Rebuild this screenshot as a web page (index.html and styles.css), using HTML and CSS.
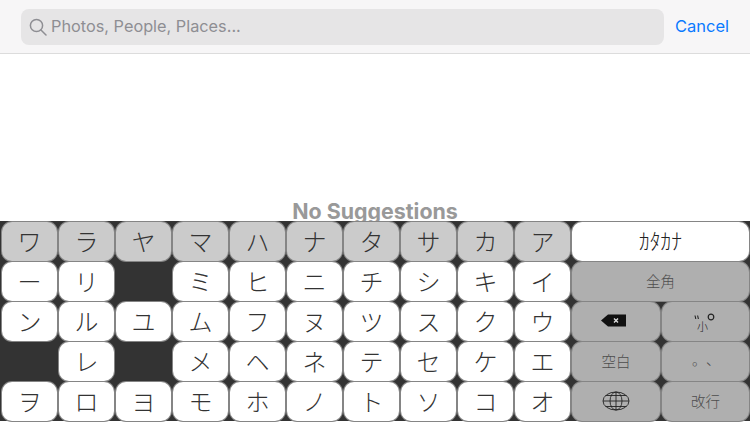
FILE: index.html
```html
<!DOCTYPE html>
<html lang="ja">
<head>
<meta charset="utf-8">
<title>Search</title>
<link rel="stylesheet" href="styles.css">
</head>
<body>
<div class="page">
  <header class="search-bar">
    <div class="field">
      <svg class="search-icon" width="18" height="18" viewBox="0 0 18 18" fill="none" stroke="#8e8e93" stroke-width="1.5" stroke-linecap="round"><circle cx="7.5" cy="7.500" r="6.100"/><path d="M12 12l5 5"/></svg>
      <span class="placeholder">Photos, People, Places...</span>
    </div>
    <span class="cancel">Cancel</span>
  </header>
  <main class="results"><p class="empty">No Suggestions</p></main>
  <section class="keyboard">
    <div class="key alt">ワ</div><div class="key alt">ラ</div><div class="key alt">ヤ</div><div class="key alt">マ</div><div class="key alt">ハ</div><div class="key alt">ナ</div><div class="key alt">タ</div><div class="key alt">サ</div><div class="key alt">カ</div><div class="key alt">ア</div><div class="key wide mode">ｶﾀｶﾅ</div>
    <div class="key">ー</div><div class="key">リ</div><div class="blank"></div><div class="key">ミ</div><div class="key">ヒ</div><div class="key">ニ</div><div class="key">チ</div><div class="key">シ</div><div class="key">キ</div><div class="key">イ</div><div class="key wide fn">全角</div>
    <div class="key">ン</div><div class="key">ル</div><div class="key">ユ</div><div class="key">ム</div><div class="key">フ</div><div class="key">ヌ</div><div class="key">ツ</div><div class="key">ス</div><div class="key">ク</div><div class="key">ウ</div>
    <div class="key fn"><svg class="backspace" width="25" height="13" viewBox="0 0 25 13"><path d="M0 6.500L7 .5h18v12H7z" fill="#111"/><path d="M13 4.500l4 4M17 4.500l-4 4" stroke="#ddd" stroke-width="1.400"/></svg></div>
    <div class="key fn small-key">
      <svg class="dakuten" width="5" height="5" viewBox="0 0 5 5" fill="none" stroke="#222" stroke-width="1.100"><path d="M1 0.500l0.800 3.500M3.600 0.500l0.800 3.500"/></svg>
      <span class="small">小</span>
      <svg class="handakuten" width="8" height="8" viewBox="0 0 8 8" fill="none" stroke="#222" stroke-width="1.200"><circle cx="4" cy="4" r="2.800"/></svg>
    </div>
    <div class="blank"></div><div class="key">レ</div><div class="blank"></div><div class="key">メ</div><div class="key">ヘ</div><div class="key">ネ</div><div class="key">テ</div><div class="key">セ</div><div class="key">ケ</div><div class="key">エ</div>
    <div class="key fn">空白</div><div class="key fn punct"><span>。</span><span>、</span></div>
    <div class="key">ヲ</div><div class="key">ロ</div><div class="key">ヨ</div><div class="key">モ</div><div class="key">ホ</div><div class="key">ノ</div><div class="key">ト</div><div class="key">ソ</div><div class="key">コ</div><div class="key">オ</div>
    <div class="key fn"><svg width="28" height="20" viewBox="0 0 28 20" fill="none" stroke="#222" stroke-width="0.900"><ellipse cx="14" cy="10" rx="13" ry="9"/><ellipse cx="14" cy="10" rx="6" ry="9"/><path d="M14 1v18M1 10h26M3.500 4.500h21M3.500 15.500h21"/></svg></div>
    <div class="key fn">改行</div>
  </section>
</div>
</body>
</html>
```
FILE: styles.css
```css
* { box-sizing: border-box; }
html, body { margin: 0; padding: 0; background: #fff; }
.page {
  width: 750px;
  height: 422px;
  display: flex;
  flex-direction: column;
  overflow: hidden;
  font-family: Inter, "Noto Sans CJK JP", sans-serif;
}
.search-bar {
  flex: 0 0 54px;
  display: flex;
  align-items: center;
  gap: 11px;
  padding: 0 0 0 21px;
  background: #f7f6f7;
  border-bottom: 1px solid #dcdcdc;
}
.field {
  flex: 0 0 643px;
  height: 36px;
  display: flex;
  align-items: center;
  gap: 4px;
  padding-left: 8px;
  background: #e6e5e6;
  border-radius: 8px;
}
.search-icon { flex: none; }
.placeholder { padding-bottom: 2px; font-size: 16.300px; color: #8e8e93; }
.cancel { padding-bottom: 2px; font-size: 16.500px; color: #0a7aff; }
.results {
  flex: 1;
  min-height: 0;
  overflow: hidden;
  display: flex;
  justify-content: center;
  align-items: flex-end;
}
.empty {
  margin: 0;
  font-size: 21.400px;
  font-weight: 700;
  line-height: 19px;
  color: #999;
}
.keyboard {
  flex: 0 0 200px;
  margin-bottom: 1px;
  display: grid;
  grid-template-columns: repeat(10, 55px) 88px 87px;
  grid-auto-rows: 39px;
  gap: 1px 2px;
  padding: 1px 0 0 2px;
  background: #333;
  font-family: "Noto Sans CJK JP", sans-serif;
}
.key {
  display: flex;
  align-items: center;
  justify-content: center;
  padding-bottom: 2px;
  background: #fff;
  border-radius: 10px;
  box-shadow: 0 0 0 1px #858585;
  font-size: 24px;
  font-weight: 300;
  color: #333;
}
.alt { background: #cbcbcb; }
.wide { grid-column: span 2; }
.mode { padding-bottom: 4px; font-size: 21.500px; color: #222; }
.fn { background: #afafaf; font-size: 14.500px; color: #4d4d4d; }
.backspace { margin-right: 6px; }
.small-key { align-items: flex-start; padding: 11px 2px 0 0; }
.small { font-size: 11px; line-height: 11px; margin: 8px -1px 0 -2px; color: #222; }
.dakuten { flex: none; margin-top: 2px; }
.handakuten { flex: none; }
.punct { gap: 0; padding: 0 0 6px 1px; font-size: 14px; }
```
